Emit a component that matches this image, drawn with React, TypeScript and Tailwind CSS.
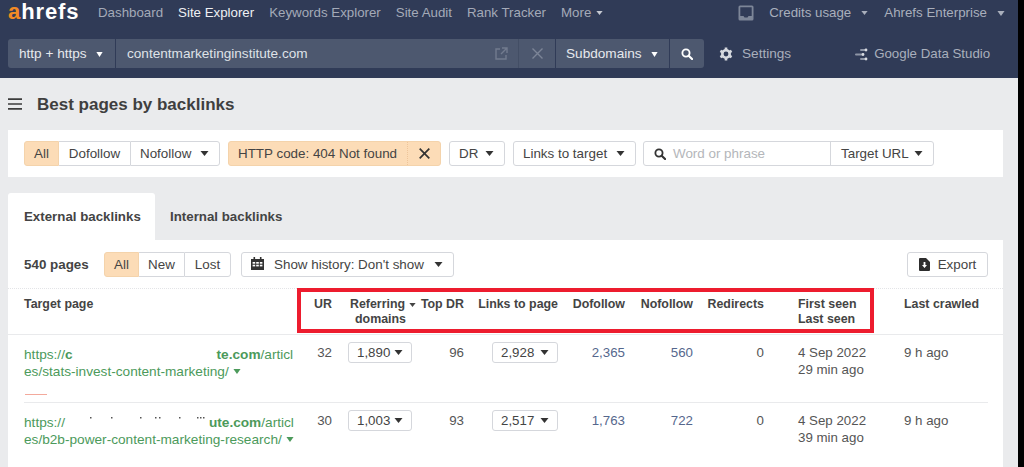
import React from "react";

function Caret({ className = "" }: { className?: string }) {
  return (
    <svg width="9" height="5" viewBox="0 0 9 5" preserveAspectRatio="none" className={"shrink-0 " + className}>
      <path d="M0.5 0 H8.5 L4.5 5 Z" fill="currentColor" />
    </svg>
  );
}

function Search({ className = "", size = 13 }: { className?: string; size?: number }) {
  return (
    <svg width={size} height={size} viewBox="0 0 13 13" className={"shrink-0 " + className}>
      <circle cx="5.4" cy="5.4" r="3.9" fill="none" stroke="currentColor" strokeWidth="2" />
      <path d="M8.3 8.3 L12 12" stroke="currentColor" strokeWidth="2.3" strokeLinecap="round" />
    </svg>
  );
}

function Gear() {
  return (
    <svg width="14" height="14" viewBox="0 0 14 14" className="shrink-0">
      <circle cx="7" cy="7" r="3.7" fill="none" stroke="#d6d9df" strokeWidth="2.6" />
      <g stroke="#d6d9df" strokeWidth="2.6">
        <path d="M7 0.5V3" />
        <path d="M7 11V13.5" />
        <path d="M1.4 3.8L3.5 5" />
        <path d="M10.5 9L12.6 10.2" />
        <path d="M1.4 10.2L3.5 9" />
        <path d="M10.5 5L12.6 3.8" />
      </g>
    </svg>
  );
}

function Inbox() {
  return (
    <svg width="16" height="16" viewBox="0 0 16 16" className="shrink-0">
      <rect x="0.5" y="0.5" width="15" height="15" rx="1.5" fill="#7d8698" />
      <path d="M2.3 2.2H13.7V11H10.5L9.5 12.5H6.5L5.5 11H2.3Z" fill="#303b57" />
    </svg>
  );
}

function DataStudio() {
  return (
    <svg width="13" height="13" viewBox="0 0 13 13" className="shrink-0">
      <rect x="5" y="1" width="6" height="2" rx="1" fill="#8d95a6" />
      <circle cx="11" cy="2" r="1.4" fill="#d8dbe1" />
      <rect x="0" y="5.5" width="9" height="2" rx="1" fill="#8d95a6" />
      <circle cx="8" cy="6.5" r="1.4" fill="#d8dbe1" />
      <rect x="5" y="10" width="6" height="2" rx="1" fill="#8d95a6" />
      <circle cx="11" cy="11" r="1.4" fill="#d8dbe1" />
    </svg>
  );
}

function Calendar() {
  return (
    <svg width="13" height="13" viewBox="0 0 13 13" className="shrink-0">
      <path d="M0 2H13V13H0Z" fill="#333" />
      <rect x="2.5" y="0" width="1.6" height="3" fill="#333" />
      <rect x="8.9" y="0" width="1.6" height="3" fill="#333" />
      <g fill="#fff">
        <rect x="1.6" y="5" width="2.6" height="1.7" />
        <rect x="5.2" y="5" width="2.6" height="1.7" />
        <rect x="8.8" y="5" width="2.6" height="1.7" />
        <rect x="1.6" y="7.7" width="2.6" height="1.7" />
        <rect x="5.2" y="7.7" width="2.6" height="1.7" />
        <rect x="8.8" y="7.7" width="2.6" height="1.7" />
      </g>
    </svg>
  );
}

function ExportIcon() {
  return (
    <svg width="11" height="13" viewBox="0 0 11 13" className="shrink-0">
      <path d="M0 1Q0 0 1 0H7L11 4V12Q11 13 10 13H1Q0 13 0 12Z" fill="#2d2d2d" />
      <path d="M4.6 4H6.4V7H8L5.5 10L3 7H4.6Z" fill="#fff" />
    </svg>
  );
}

function RedactionDots() {
  return (
    <svg width="144" height="17" viewBox="0 0 144 17" className="inline-block align-top">
      <g fill="#555">
        <rect x="25" y="3" width="1.5" height="1.5" />
        <rect x="46" y="3" width="1.5" height="1.5" />
        <rect x="75" y="3" width="1.5" height="1.5" />
        <rect x="90" y="3" width="1.5" height="1.5" />
        <rect x="94" y="3" width="1.5" height="1.5" />
        <rect x="114" y="3" width="1.5" height="1.5" />
        <rect x="132" y="3" width="1.5" height="1.5" />
        <rect x="135" y="3" width="1.5" height="1.5" />
        <rect x="138" y="3" width="1.5" height="1.5" />
      </g>
    </svg>
  );
}

const box = "flex items-center border border-[#d5d7dc] bg-white rounded-[3px] text-[#444]";

function Select({ children, className = "" }: { children: React.ReactNode; className?: string }) {
  return (
    <div className={box + " h-[25px] justify-between pl-[9px] pr-[10px] " + className}>
      <span className="pt-[2px]">{children}</span>
      <Caret className="text-[#333]" />
    </div>
  );
}

function NavLink({ children, active }: { children: React.ReactNode; active?: boolean }) {
  return <span className={active ? "text-[#eef0f3]" : "text-[#a4aab8]"}>{children}</span>;
}

const cols = "grid grid-cols-[272px_36px_80px_52px_94px_67px_68px_71px_140px_1fr]";

function CountSelect({ value, w }: { value: string; w: string }) {
  return (
    <div className={box + " h-[21px] justify-between px-[8px] text-[13.3px] " + w}>
      <span>{value}</span>
      <Caret className="text-[#333]" />
    </div>
  );
}

function Row({ lines, tail, ur, rd, dr, ltp, dof, nof, seen, redacted, border }: {
  lines: React.ReactNode; tail: string; ur: string; rd: string; dr: string; ltp: string;
  dof: string; nof: string; seen: string; redacted?: boolean; border?: boolean;
}) {
  return (
    <div className={cols + " ml-[16px] mr-[15px] pt-[7px] text-[13.3px] leading-[17px] text-[#555] " + (border ? "h-[68px] border-b border-[#e9eaec]" : "h-[64px]")}>
      <div className="relative pt-[4px] text-[13.65px] text-[#4c9a5b]">
        <div className="w-[271px] overflow-hidden whitespace-nowrap">{lines}</div>
        <div className="flex items-center gap-[4px] whitespace-nowrap">
          {tail}
          <Caret className="h-[5px] w-[8px]" />
        </div>
        {redacted && <div className="absolute left-[1px] top-[52px] h-px w-[22px] bg-[#f3a99c]" />}
      </div>
      <div className="pt-[2px] text-right">{ur}</div>
      <div className="flex justify-end"><CountSelect value={rd} w="w-[64px]" /></div>
      <div className="pt-[2px] text-right">{dr}</div>
      <div className="flex justify-end"><CountSelect value={ltp} w="w-[66px]" /></div>
      <div className="pt-[2px] text-right text-[#55678d]">{dof}</div>
      <div className="pt-[2px] text-right text-[#55678d]">{nof}</div>
      <div className="pt-[2px] text-right">0</div>
      <div className="pl-[34px] pt-[2px]">
        <div>4 Sep 2022</div>
        <div>{seen}</div>
      </div>
      <div className="pt-[2px]">9 h ago</div>
    </div>
  );
}

export default function App() {
  return (
    <div className="flex h-[467px] w-[1024px] overflow-hidden bg-black font-['Liberation_Sans',Arial,sans-serif]">
      <div className="flex w-[1018px] shrink-0 flex-col bg-[#eaebed]">
        {/* Top bar */}
        <header className="h-[78px] shrink-0 bg-[#303b57] text-[13.3px]">
          <div className="flex h-[26px] items-center justify-between pl-[8px] pr-[13px]">
            <div className="flex h-full items-center">
              <span className="h-[24px] w-[90px] self-start text-[22px] font-bold leading-[24px] tracking-[0.9px] text-white">
                <span className="text-[#f28a25]">a</span>hrefs
              </span>
              <div className="flex items-center gap-[15px]">
                <NavLink>Dashboard</NavLink>
                <NavLink active>Site Explorer</NavLink>
                <NavLink>Keywords Explorer</NavLink>
                <NavLink>Site Audit</NavLink>
                <NavLink>Rank Tracker</NavLink>
                <span className="flex items-center gap-[5px] text-[#a4aab8]">More <Caret className="h-[4px] w-[7px] text-[#c5c9d2]" /></span>
              </div>
            </div>
            <div className="flex items-center text-[#a9afbc]">
              <Inbox />
              <span className="ml-[15px] flex items-center gap-[10px]">Credits usage <Caret className="h-[4px] w-[7px]" /></span>
              <span className="ml-[16px] flex items-center gap-[10px]">Ahrefs Enterprise <Caret className="h-[5px] w-[8px]" /></span>
            </div>
          </div>
          <div className="mt-[13px] flex h-[29px] items-stretch pl-[8px] text-[13.6px]">
            <div className="flex w-[107px] items-center gap-[9px] rounded-l-[3px] bg-[#4d586f] pl-[11px] pt-[1px] text-[#e7e9ed]">
              http + https <Caret className="h-[5px] w-[7px] text-white" />
            </div>
            <div className="ml-px flex w-[439px] items-center justify-between bg-[#4d586f] pl-[11px] text-[#dfe2e7]">
              <span className="pt-[1px]">contentmarketinginstitute.com</span>
              <div className="flex h-full items-center">
                <svg width="13" height="13" viewBox="0 0 13 13" className="mr-[10px]">
                  <path d="M5 2H1V12H11V8M7 1H12V6M12 1L6 7" fill="none" stroke="#727b8f" strokeWidth="1.4" />
                </svg>
                <span className="flex h-full w-[37px] items-center justify-center border-l border-[#434e65]">
                  <svg width="11" height="11" viewBox="0 0 11 11">
                    <path d="M0.5 0.5L10.5 10.5M10.5 0.5L0.5 10.5" stroke="#7c8597" strokeWidth="1.4" />
                  </svg>
                </span>
              </div>
            </div>
            <div className="ml-px flex w-[113px] items-center gap-[9px] bg-[#4d586f] pl-[10px] pt-[1px] text-[#e7e9ed]">
              Subdomains <Caret className="h-[5px] w-[7px] text-white" />
            </div>
            <div className="ml-px flex w-[34px] items-center justify-center rounded-r-[3px] bg-[#4d586f] text-white">
              <Search size={12} />
            </div>
            <div className="ml-[15px] flex items-center gap-[9px] pt-[1px] text-[#a9afbc]">
              <Gear /> Settings
            </div>
            <div className="ml-[64px] flex items-center gap-[6px] pt-[1px] text-[13.3px] text-[#a9afbc]">
              <DataStudio /> Google Data Studio
            </div>
          </div>
        </header>

        {/* Title */}
        <div className="flex h-[52px] shrink-0 items-center pl-[8px]">
          <svg width="14" height="12" viewBox="0 0 14 12" className="shrink-0">
            <path d="M0 1.2H14M0 6H14M0 10.8H14" stroke="#3c3c3c" strokeWidth="1.7" />
          </svg>
          <h1 className="ml-[15px] pt-[2px] text-[17px] font-bold text-[#3f3f3f]">Best pages by backlinks</h1>
        </div>

        {/* Filters */}
        <div className="mx-[8px] flex h-[47px] w-[995px] shrink-0 items-center bg-white pl-[16px] text-[13.4px] text-[#444]">
          <div className="flex h-[25px]">
            <span className="flex w-[35px] items-center justify-center rounded-l-[3px] border border-[#f4d3ab] bg-[#fcdcb7] pt-[2px]">All</span>
            <span className="flex w-[71px] items-center justify-center border-y border-[#d5d7dc] pt-[2px]">Dofollow</span>
            <span className="flex w-[90px] items-center justify-between rounded-r-[3px] border border-[#d5d7dc] pl-[9px] pr-[10px]">
              <span className="pt-[2px]">Nofollow</span> <Caret className="text-[#333]" />
            </span>
          </div>
          <div className="ml-[8px] flex h-[25px] rounded-[3px] border border-[#f4d3ab] bg-[#fcdcb7]">
            <span className="flex w-[178px] items-center pl-[9px] pt-[2px]">HTTP code: 404 Not found</span>
            <span className="flex w-[33px] items-center justify-center border-l border-dotted border-[#eec59a]">
              <svg width="11" height="11" viewBox="0 0 11 11">
                <path d="M0.7 0.7L10.3 10.3M10.3 0.7L0.7 10.3" stroke="#333" strokeWidth="1.7" />
              </svg>
            </span>
          </div>
          <Select className="ml-[8px] w-[56px]">DR</Select>
          <Select className="ml-[8px] w-[123px]">Links to target</Select>
          <div className="ml-[7px] flex h-[25px] rounded-[3px] border border-[#d5d7dc]">
            <div className="flex w-[187px] items-center gap-[7px] border-r border-[#d5d7dc] pl-[10px]">
              <Search className="text-[#333]" size={12} />
              <span className="pt-[2px] text-[#b4b6ba]">Word or phrase</span>
            </div>
            <div className="flex w-[102px] items-center justify-between px-[10px]">
              <span className="pt-[2px]">Target URL</span> <Caret className="text-[#333]" />
            </div>
          </div>
        </div>

        {/* Tabs */}
        <div className="ml-[8px] mt-[16px] flex h-[47px] shrink-0 items-center text-[13.3px] font-bold text-[#444]">
          <div className="flex h-full w-[147px] items-center rounded-t-[3px] bg-white pl-[16px]">External backlinks</div>
          <div className="ml-[15px]">Internal backlinks</div>
        </div>

        {/* Table card */}
        <div className="relative mx-[8px] w-[995px] flex-1 overflow-hidden bg-white">
          <div className="flex h-[49px] items-center border-b border-dotted border-[#e3e4e7] pl-[16px] pr-[15px] text-[13.4px] text-[#444]">
            <span className="w-[80px] pt-[2px] font-bold">540 pages</span>
            <div className="flex h-[25px]">
              <span className="flex w-[35px] items-center justify-center rounded-l-[3px] border border-[#f4d3ab] bg-[#fcdcb7] pt-[2px]">All</span>
              <span className="flex w-[45px] items-center justify-center border-y border-[#d5d7dc] pt-[2px]">New</span>
              <span className="flex w-[47px] items-center justify-center rounded-r-[3px] border border-[#d5d7dc] pt-[2px]">Lost</span>
            </div>
            <div className={box + " ml-[10px] h-[25px] w-[213px] justify-between pl-[9px] pr-[10px]"}>
              <span className="flex items-center gap-[10px]"><Calendar /> <span className="pt-[2px]">Show history: Don't show</span></span>
              <Caret className="text-[#333]" />
            </div>
            <div className={box + " ml-auto h-[25px] w-[81px] justify-center gap-[8px]"}>
              <ExportIcon /> <span className="pt-[2px]">Export</span>
            </div>
          </div>

          <div className={cols + " h-[46px] border-b border-[#e9eaec] pl-[16px] pt-[8px] text-[12.4px] font-bold leading-[15px] text-[#444]"}>
            <div>Target page</div>
            <div className="text-right">UR</div>
            <div className="whitespace-nowrap pl-[18px]">
              <div className="flex items-center gap-[4px]">Referring <Caret className="h-[4px] w-[7px]" /></div>
              <div className="pl-[5px]">domains</div>
            </div>
            <div className="text-right">Top DR</div>
            <div className="text-right">Links to page</div>
            <div className="text-right">Dofollow</div>
            <div className="text-right">Nofollow</div>
            <div className="text-right">Redirects</div>
            <div className="pl-[34px]">
              <div>First seen</div>
              <div>Last seen</div>
            </div>
            <div>Last crawled</div>
          </div>

          <Row
            border
            redacted
            lines={<>https://<span className="font-bold">c</span><span className="inline-block w-[144px]" /><span className="font-bold">te.com</span>/articl</>}
            tail="es/stats-invest-content-marketing/"
            ur="32" rd="1,890" dr="96" ltp="2,928" dof="2,365" nof="560" seen="29 min ago"
          />
          <Row
            lines={<>https://<RedactionDots /><span className="font-bold">ute.com</span>/articl</>}
            tail="es/b2b-power-content-marketing-research/"
            ur="30" rd="1,003" dr="93" ltp="2,517" dof="1,763" nof="722" seen="39 min ago"
          />

          {/* Red annotation */}
          <div className="pointer-events-none absolute left-[289px] top-[48px] h-[45px] w-[577px] border-[4px] border-[#ed1c2e]" />
        </div>
      </div>
    </div>
  );
}
